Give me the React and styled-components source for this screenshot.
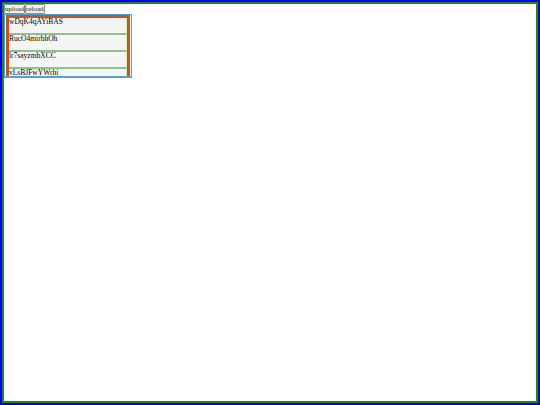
import React from "react";
import styled, { createGlobalStyle } from "styled-components";

const Global = createGlobalStyle`
  html, body { margin: 0; padding: 0; height: 100%; }
  body { font-family: "Liberation Serif", serif; }
  #root { height: 100%; }
`;

const Frame = styled.div`
  box-sizing: border-box;
  height: 100%;
  border: 2px solid #0000e0;
`;

const Inner = styled.div`
  box-sizing: border-box;
  height: 100%;
  border: 2px solid #1c8a1c;
  background: #fff;
`;

const Toolbar = styled.div`
  display: flex;
`;

const Btn = styled.button`
  box-sizing: border-box;
  font-family: "Liberation Serif", serif;
  font-size: 7px;
  padding: 0;
  margin: 0;
  height: 10px;
  line-height: 8px;
  border: 1px solid #8f8f8f;
  border-radius: 1px;
  background: #efefef;
  color: #222;
`;

const ListBox = styled.div`
  box-sizing: border-box;
  width: 128px;
  height: 64px;
  overflow: hidden;
  border: 1px solid #5b9bd5;
  border-bottom-width: 2px;
  padding: 0 1px;
`;

const List = styled.div`
  border: 3px solid #c0562a;
  background: #f5f5f5;
`;

const Item = styled.div`
  font-size: 7.5px;
  line-height: 8px;
  height: 17px;
  padding: 0;
  box-sizing: border-box;
  color: #000;
  border-bottom: 2px solid #8fc28a;
  border-right: 1px solid #f0e6a0;
  &:last-child { border-bottom: none; }
`;

const items = ["wDqK4qAYiBAS", "RucO4mirbhOh", "lr7sayzmbXCC", "vLsBJFwYWrhi", "aQ3kdLmPzR2x"];

export default function App() {
  return (
    <>
      <Global />
      <Frame>
        <Inner>
          <Toolbar>
            <Btn>upload</Btn>
            <Btn>reload</Btn>
          </Toolbar>
          <ListBox>
            <List>
              {items.map((t) => (
                <Item key={t}>{t}</Item>
              ))}
            </List>
          </ListBox>
        </Inner>
      </Frame>
    </>
  );
}
